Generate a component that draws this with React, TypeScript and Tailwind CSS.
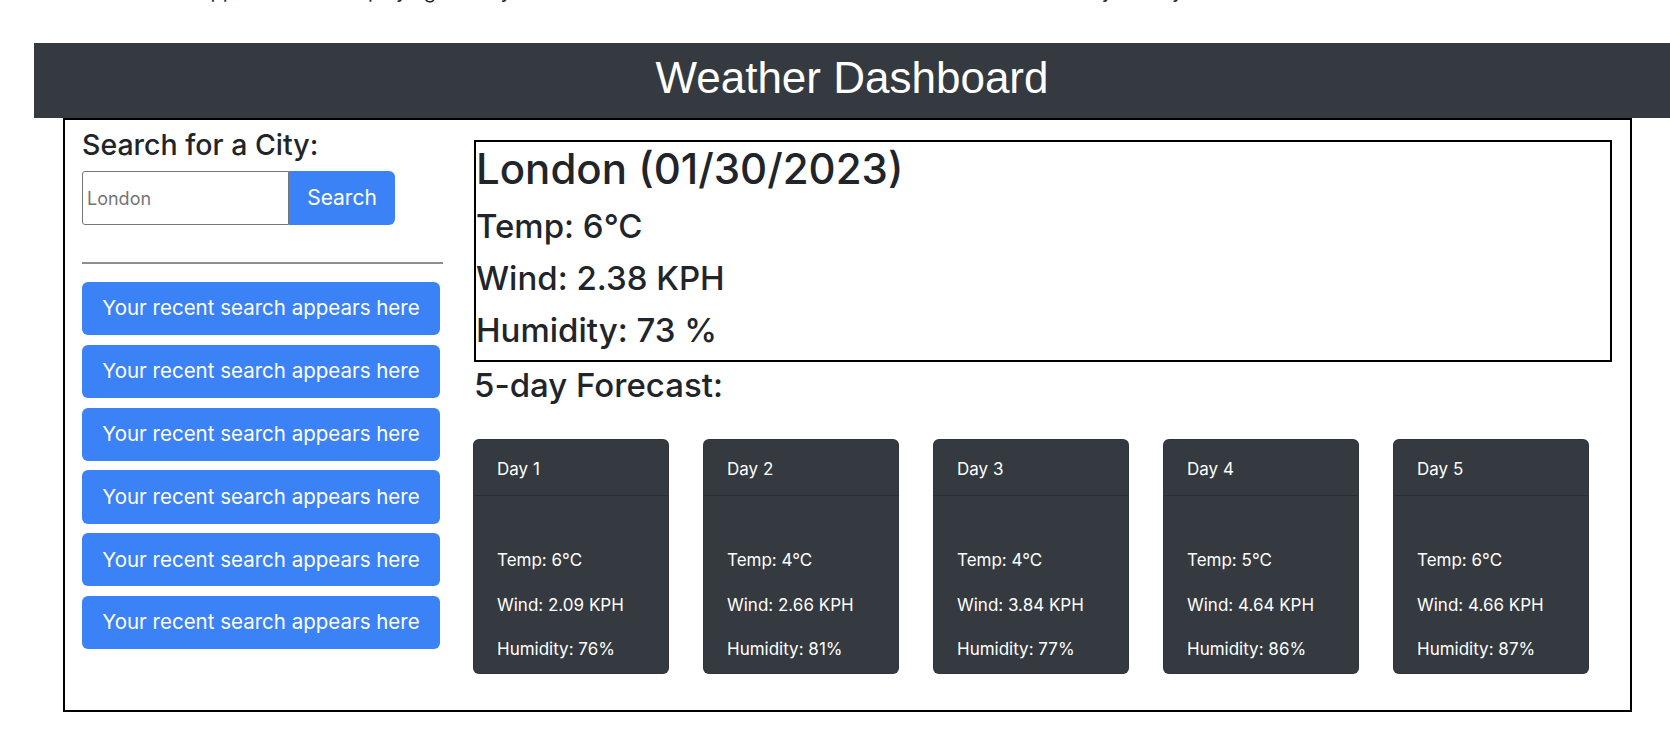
import React from "react";

const days = [
  { d: "Day 1", t: "6", w: "2.09", h: "76" },
  { d: "Day 2", t: "4", w: "2.66", h: "81" },
  { d: "Day 3", t: "4", w: "3.84", h: "77" },
  { d: "Day 4", t: "5", w: "4.64", h: "86" },
  { d: "Day 5", t: "6", w: "4.66", h: "87" },
];

export default function App() {
  return (
    <div className="w-[1670px] h-[744px] overflow-hidden bg-white text-[#212529] font-['Inter','Noto_Sans',sans-serif]">
      <div className="h-[43px] overflow-hidden">
        <p className="-mt-[19px] pl-[52px] text-[20px] leading-[20px] whitespace-nowrap">
          A weather web application for displaying the city weather and forecast for the next five dates and the recent city history list too.
        </p>
      </div>
      <header className="ml-[34px] h-[75px] bg-[#343a40] flex items-center justify-center pb-[6px]">
        <h1 className="text-white text-[44px] leading-none font-['Liberation_Sans','Arial',sans-serif]">
          Weather Dashboard
        </h1>
      </header>
      <main className="ml-[63px] w-[1569px] h-[594px] border-2 border-black flex pl-[17px]">
        <section className="w-[361px] pt-[8px] flex flex-col">
          <h2 className="text-[28.5px] leading-[34px] font-medium">Search for a City:</h2>
          <div className="mt-[9px] flex h-[54px] w-[313px]">
            <input
              className="w-[207px] h-full border border-[#767676] rounded-l-[3px] pl-[4px] text-[18px] outline-none placeholder:text-[#757575]"
              placeholder="London"
            />
            <button className="flex-1 h-full bg-[#3b82f6] text-white text-[21px] rounded-r-[6px]">Search</button>
          </div>
          <div className="mt-[37px] h-[2px] bg-[#8e8e8e]" />
          <div className="mt-[18px] w-[358px] flex flex-col gap-[9.5px]">
            {Array.from({ length: 6 }).map((_, i) => (
              <button
                key={i}
                className="h-[53.3px] bg-[#3b82f6] text-white text-[20.5px] leading-none rounded-[6px] flex items-center justify-center"
              >
                Your recent search appears here
              </button>
            ))}
          </div>
        </section>
        <section className="ml-[31px] w-[1138px] flex flex-col">
          <div className="mt-[20px] border-2 border-black pb-[4px]">
            <h2 className="text-[42px] leading-[54px] font-medium">London (01/30/2023)</h2>
            <p className="mt-[4px] text-[33px] leading-[52px] font-medium">Temp: 6°C</p>
            <p className="text-[33px] leading-[52px] font-medium">Wind: 2.38 KPH</p>
            <p className="text-[33px] leading-[52px] font-medium">Humidity: 73 %</p>
          </div>
          <h3 className="mt-[3px] text-[33px] leading-[40px] font-medium">5-day Forecast:</h3>
          <div className="mt-[34px] flex gap-[34px] -ml-[1px]">
            {days.map((d) => (
              <div key={d.d} className="w-[196px] h-[235px] bg-[#343a40] rounded-[6px] text-white border border-black/10">
                <div className="h-[56px] border-b border-black/20 px-[23px] pt-[19px]">
                  <p className="text-[17px] leading-[20px]">{d.d}</p>
                </div>
                <div className="px-[23px] pt-[42px]">
                  <p className="text-[17px] leading-[44.7px]">Temp: {d.t}°C</p>
                  <p className="text-[17px] leading-[44.7px]">Wind: {d.w} KPH</p>
                  <p className="text-[17px] leading-[44.7px]">Humidity: {d.h}%</p>
                </div>
              </div>
            ))}
          </div>
        </section>
      </main>
    </div>
  );
}
